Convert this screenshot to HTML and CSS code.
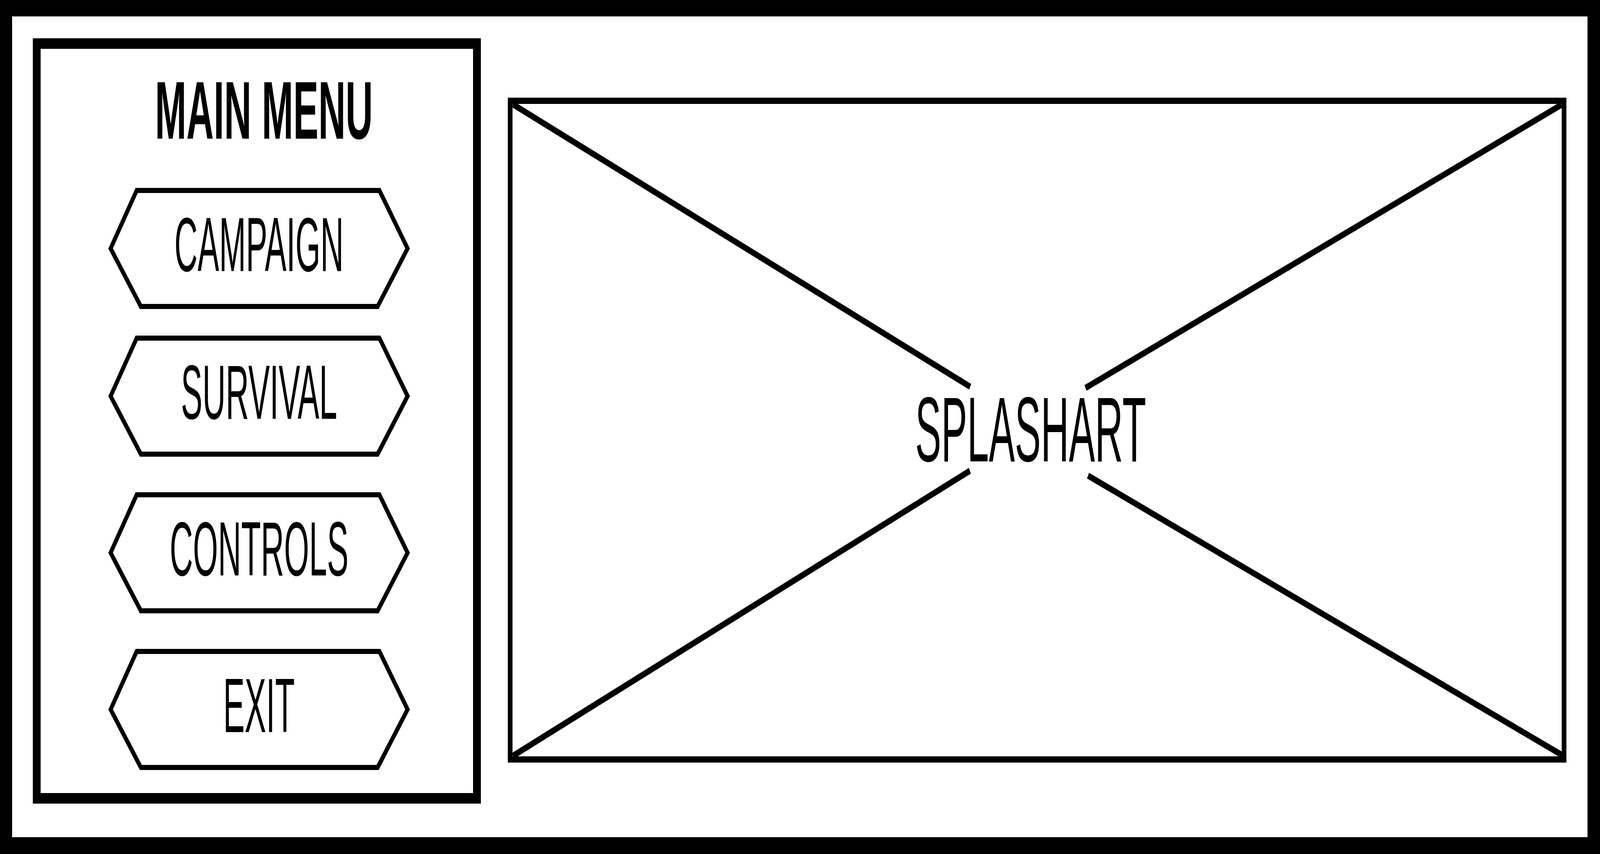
FILE: index.html
```html
<!DOCTYPE html>
<html lang="en">
<head>
<meta charset="utf-8">
<title>Main Menu</title>
<link rel="stylesheet" href="styles.css">
</head>
<body>
<div class="frame">
  <section class="menu">
    <h1 class="menu-title"><span class="title-text">MAIN MENU</span></h1>
    <div class="btn btn-first">
      <svg class="hex" viewBox="0 0 1007 310" preserveAspectRatio="none" aria-hidden="true"><polygon points="8,155 95,6.5 905,6.5 999,155 899,303.5 109,303.5"/></svg>
      <span class="btn-label">CAMPAIGN</span>
    </div>
    <div class="btn">
      <svg class="hex" viewBox="0 0 1007 310" preserveAspectRatio="none" aria-hidden="true"><polygon points="8,155 95,6.5 905,6.5 999,155 899,303.5 109,303.5"/></svg>
      <span class="btn-label">SURVIVAL</span>
    </div>
    <div class="btn">
      <svg class="hex" viewBox="0 0 1007 310" preserveAspectRatio="none" aria-hidden="true"><polygon points="8,155 95,6.5 905,6.5 999,155 899,303.5 109,303.5"/></svg>
      <span class="btn-label">CONTROLS</span>
    </div>
    <div class="btn">
      <svg class="hex" viewBox="0 0 1007 310" preserveAspectRatio="none" aria-hidden="true"><polygon points="8,155 95,6.5 905,6.5 999,155 899,303.5 109,303.5"/></svg>
      <span class="btn-label">EXIT</span>
    </div>
  </section>
  <section class="splash">
    <svg class="cross" viewBox="0 0 3500 1670" preserveAspectRatio="none" aria-hidden="true">
      <line x1="1" y1="1" x2="1527" y2="724"/>
      <line x1="1911.6" y1="727" x2="3500" y2="2"/>
      <line x1="1" y1="1669" x2="1526" y2="939"/>
      <line x1="1920" y1="951.5" x2="3502" y2="1667"/>
    </svg>
    <span class="splash-label">SPLASHART</span>
  </section>
</div>
<script src="script.js"></script>
</body>
</html>
```

FILE: styles.css
```css
:root {
  --x: calc(100vw / 5339);
  --y: calc(100vh / 2186);
  --ar: 1;
}

html, body {
  margin: 0;
  padding: 0;
  background: #ffffff;
  overflow: hidden;
}

body {
  font-family: "Liberation Sans", Arial, sans-serif;
  color: #000000;
}

.frame {
  box-sizing: border-box;
  width: 100vw;
  height: 100vh;
  border-style: solid;
  border-color: #000000;
  border-top-width: calc(42 * var(--y));
  border-right-width: calc(42 * var(--x));
  border-bottom-width: calc(43 * var(--y));
  border-left-width: calc(41 * var(--x));
  background: #ffffff;
  display: flex;
  align-items: flex-start;
  padding: calc(56 * var(--y)) 0 0 calc(69 * var(--x));
  overflow: hidden;
}

.menu {
  box-sizing: border-box;
  flex: 0 0 auto;
  width: calc(1495 * var(--x));
  height: calc(1959 * var(--y));
  border-style: solid;
  border-color: #000000;
  border-width: calc(27 * var(--y)) calc(27 * var(--x));
  display: flex;
  flex-direction: column;
  align-items: flex-start;
  padding-top: calc(53 * var(--y));
}

.menu-title {
  align-self: stretch;
  margin: 0 0 calc(93 * var(--y)) 0;
  padding-left: calc(48 * var(--x));
  display: flex;
  justify-content: center;
  font-size: calc(210 * var(--y));
  line-height: calc(210 * var(--y));
  height: calc(210 * var(--y));
  font-weight: 700;
  white-space: nowrap;
}

.title-text {
  display: inline-block;
  transform: scaleX(calc(0.599 * var(--ar)));
}

.btn {
  position: relative;
  flex: 0 0 auto;
  box-sizing: border-box;
  width: calc(1007 * var(--x));
  height: calc(310 * var(--y));
  margin-left: calc(225 * var(--x));
  padding-bottom: calc(20 * var(--y));
  display: flex;
  justify-content: center;
  align-items: center;
}

.btn + .btn {
  margin-top: calc(91 * var(--y));
}

.btn-first + .btn {
  margin-top: calc(68 * var(--y));
}

.hex {
  position: absolute;
  left: 0;
  top: 0;
  width: 100%;
  height: 100%;
  overflow: visible;
}

.hex polygon {
  fill: #ffffff;
  stroke: #000000;
  stroke-width: 13;
  stroke-linejoin: miter;
  stroke-miterlimit: 10;
}

.btn-label {
  position: relative;
  display: inline-block;
  font-size: calc(197 * var(--y));
  line-height: calc(197 * var(--y));
  font-weight: 400;
  white-space: nowrap;
  transform: scaleX(calc(0.545 * var(--ar)));
}

.splash {
  position: relative;
  box-sizing: border-box;
  flex: 0 0 auto;
  width: calc(3532 * var(--x));
  height: calc(1702 * var(--y));
  margin: calc(152 * var(--y)) 0 0 calc(90 * var(--x));
  border-style: solid;
  border-color: #000000;
  border-width: calc(16 * var(--y)) calc(16 * var(--x));
  display: flex;
  justify-content: center;
  align-items: center;
  padding-right: calc(41 * var(--x));
  padding-bottom: calc(4 * var(--y));
}

.cross {
  position: absolute;
  left: 0;
  top: 0;
  width: 100%;
  height: 100%;
  overflow: visible;
}

.cross line {
  stroke: #000000;
  stroke-width: 16;
  stroke-linecap: butt;
}

.splash-label {
  position: relative;
  display: inline-block;
  font-size: calc(235 * var(--y));
  line-height: calc(235 * var(--y));
  font-weight: 400;
  white-space: nowrap;
  transform: scaleX(calc(0.553 * var(--ar)));
}
```

FILE: script.js
```js
(function () {
  function fit() {
    var w = window.innerWidth || document.documentElement.clientWidth;
    var h = window.innerHeight || document.documentElement.clientHeight;
    if (!w || !h) { return; }
    var ratio = (w / 5339) / (h / 2186);
    document.documentElement.style.setProperty('--ar', String(ratio));
  }
  fit();
  window.addEventListener('resize', fit);
})();
```
